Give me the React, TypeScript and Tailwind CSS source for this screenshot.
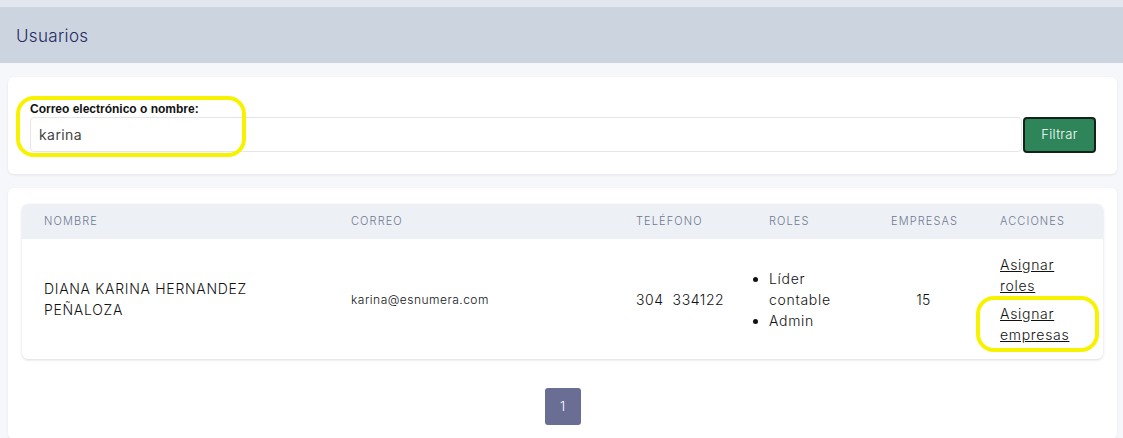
import React from 'react'

const font = { fontFamily: 'Inter, "DejaVu Sans", sans-serif' }

// columnas de la tabla de usuarios
const cols = 'grid grid-cols-[307px_285px_133px_122px_109px_124px]'

function Highlight({ className }: { className: string }) {
  return (
    <div
      className={`pointer-events-none absolute rounded-[18px] border-[4px] border-[#f7f300] ${className}`}
    />
  )
}

export default function App() {
  return (
    <div className="relative min-h-[438px] bg-[#f5f7fa]" style={font}>
      <div className="h-[7px] bg-[#e2e7ef]" />

      {/* cabecera */}
      <div className="flex h-[56px] items-center bg-[#ccd5df] px-4 pt-[3px]">
        <h1 className="text-[17px] font-light tracking-[0.02em] text-[#232a62]">Usuarios</h1>
      </div>

      <div className="flex flex-col gap-[14px] pl-2 pr-[6px] pt-[14px]">
        {/* filtro */}
        <div className="rounded-md bg-white pb-[21px] pl-[22px] pr-[21px] pt-[24px] shadow-[0_1px_3px_rgba(0,0,0,0.08)]">
          <label
            className="block text-[12px] font-bold leading-[16px] text-[#111]"
            style={{ fontFamily: '"Liberation Sans", Arial, sans-serif' }}
          >
            Correo electrónico o nombre:
          </label>
          <div className="flex items-center">
            <input
              defaultValue="karina"
              className="-mt-px h-[35px] flex-1 rounded-sm border border-[#e4e6ea] px-2 text-[14px] tracking-[0.03em] text-[#444] outline-none"
            />
            <button
              type="button"
              className="ml-px h-[36px] w-[73px] rounded-[4px] border-2 border-[#14231a] bg-[#2e8559] text-[13px] font-light tracking-wide text-white"
            >
              Filtrar
            </button>
          </div>
        </div>

        {/* tabla */}
        <div className="rounded-md bg-white px-[14px] pb-[14px] pt-4 shadow-[0_1px_3px_rgba(0,0,0,0.06)]">
          <div className="overflow-hidden rounded-md shadow-[0_1px_3px_rgba(0,0,0,0.15)]">
            <div className={`${cols} h-[35px] items-center bg-[#edf1f6] text-[11px] font-light uppercase tracking-[0.1em] text-[#6f7890]`}>
              <div className="px-[22px]">Nombre</div>
              <div className="px-[22px]">Correo</div>
              <div className="px-[22px]">Teléfono</div>
              <div className="px-[22px]">Roles</div>
              <div className="px-[22px] text-center">Empresas</div>
              <div className="px-[22px]">Acciones</div>
            </div>
            <div className={`${cols} h-[120px] items-center text-[14px] font-light leading-[21px] tracking-[0.03em] text-[#111]`}>
              <div className="px-[22px] tracking-[0.05em]">DIANA KARINA HERNANDEZ PEÑALOZA</div>
              <div className="px-[22px] text-[12px] tracking-[0.04em]">karina@esnumera.com</div>
              <div className="whitespace-nowrap px-[22px] tracking-[0.04em]">304&nbsp; 334122</div>
              <div className="px-[22px]">
                <ul className="list-disc pl-0 tracking-[0.05em]">
                  <li>Líder contable</li>
                  <li>Admin</li>
                </ul>
              </div>
              <div className="px-[22px] text-center">15</div>
              <div className="flex flex-col gap-[7px] px-[22px] tracking-[0.05em]">
                <a href="#" className="underline">Asignar roles</a>
                <a href="#" className="underline">Asignar empresas</a>
              </div>
            </div>
          </div>

          {/* paginación */}
          <div className="flex justify-center pt-[29px]">
            <button
              type="button"
              className="h-[37px] w-[36px] rounded-[3px] bg-[#6a6d94] text-[13px] font-light text-white"
            >
              1
            </button>
          </div>
        </div>
      </div>

      {/* marcas amarillas */}
      <Highlight className="left-[16px] top-[96px] h-[61px] w-[230px]" />
      <Highlight className="left-[976px] top-[296px] h-[56px] w-[123px] rounded-[14px]" />
    </div>
  )
}
